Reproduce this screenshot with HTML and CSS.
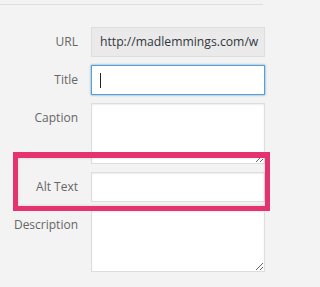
FILE: index.html
```html
<!DOCTYPE html>
<html>
<head>
<meta charset="utf-8">
<link rel="stylesheet" href="styles.css">
</head>
<body>
<div class="page">
  <div class="divider"></div>
  <div class="form">
    <label class="label">URL</label>
    <div class="field field-readonly">http://madlemmings.com/w</div>
    <label class="label">Title</label>
    <div class="field field-focus"><span class="caret"></span></div>
    <label class="label">Caption</label>
    <textarea class="area"></textarea>
    <label class="label">Alt Text</label>
    <div class="field"></div>
    <label class="label">Description</label>
    <textarea class="area area-desc"></textarea>
    <div class="highlight"></div>
  </div>
</div>
</body>
</html>
```

FILE: styles.css
```css
html, body {
  margin: 0;
  padding: 0;
  background: #f3f3f3;
  font-family: "Open Sans", "Noto Sans", sans-serif;
  font-size: 12px;
  color: #666;
  overflow: hidden;
}

.page {
  width: 276px;
  height: 287px;
  overflow: hidden;
}

.divider {
  margin: 4px 13px 0 0;
  border-top: 1px solid #dedede;
}

.form {
  position: relative;
  display: grid;
  grid-template-columns: 78px 174px;
  column-gap: 13px;
  row-gap: 8px;
  padding-top: 22px;
}

.label {
  text-align: right;
  line-height: 30px;
  height: 30px;
  color: #666;
}

.field {
  box-sizing: border-box;
  height: 30px;
  border: 1px solid #ddd;
  background: #fff;
  box-shadow: inset 0 1px 2px rgba(0, 0, 0, 0.07);
  padding: 0 8px;
  line-height: 28px;
  white-space: nowrap;
  overflow: hidden;
  color: #32373c;
}

.field-readonly {
  background: #eaeaea;
  box-shadow: none;
  font-size: 12.2px;
}

.field-focus {
  border-color: #5b9dd9;
  box-shadow: 0 0 2px rgba(30, 140, 190, 0.8);
  display: flex;
  align-items: center;
}

.caret {
  display: block;
  width: 1px;
  height: 15px;
  background: #222;
}

.area {
  box-sizing: border-box;
  display: block;
  margin: 0;
  width: 174px;
  height: 61px;
  border: 1px solid #ddd;
  background: #fff;
  box-shadow: inset 0 1px 2px rgba(0, 0, 0, 0.07);
  resize: both;
  font: inherit;
  outline: none;
}

.area-desc {
  height: 62px;
}

.highlight {
  position: absolute;
  left: 13px;
  top: 147px;
  width: 257px;
  height: 59px;
  box-sizing: border-box;
  border: 5px solid #e4336f;
  border-top-width: 6px;
  box-shadow: inset 0 0 3px rgba(0, 0, 0, 0.15);
}
```
